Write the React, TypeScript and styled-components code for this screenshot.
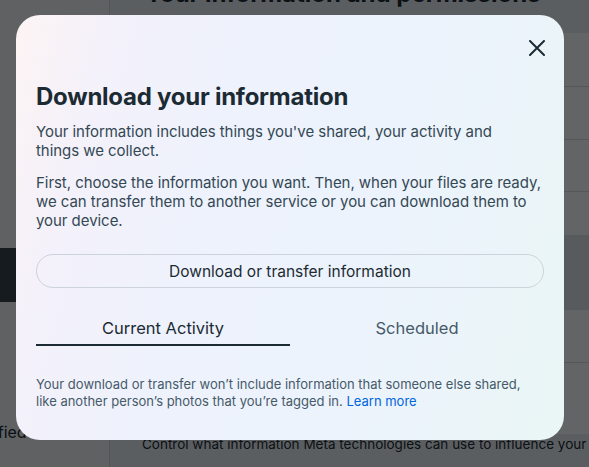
import React from "react";
import styled, { createGlobalStyle } from "styled-components";

const Global = createGlobalStyle`
  html, body { margin: 0; padding: 0; }
  body { width: 589px; height: 467px; overflow: hidden; font-family: Inter, "Noto Sans", "Liberation Sans", sans-serif; }
  #root { width: 589px; height: 467px; }
`;

const Page = styled.div`
  position: relative;
  width: 589px;
  height: 467px;
  display: flex;
  overflow: hidden;
  background: #eef3f8;
`;

const Sidebar = styled.aside`
  width: 109px;
  flex: none;
  border-right: 1px solid #cfd6dc;
  display: flex;
  flex-direction: column;
  overflow: hidden;
`;

const SideSpacer = styled.div<{ h: number }>`
  height: ${(p) => p.h}px;
  flex: none;
`;

const SideActive = styled.div`
  height: 54px;
  background: #35444c;
  flex: none;
`;

const SideLabel = styled.div`
  margin-left: -32px;
  font-size: 16px;
  line-height: 20px;
  color: #1c2b33;
  white-space: nowrap;
`;

const Content = styled.main`
  flex: 1;
  display: flex;
  flex-direction: column;
  min-width: 0;
`;

const Header = styled.div`
  height: 33px;
  background: #e4ebf2;
  display: flex;
  align-items: flex-end;
  padding-left: 35px;
  overflow: hidden;
`;

const HeaderTitle = styled.h1`
  margin: 0 0 24px;
  font-size: 24px;
  line-height: 30px;
  font-weight: 700;
  color: #1c2b33;
  white-space: nowrap;
`;

const Row = styled.div<{ h: number; dark?: boolean; last?: boolean }>`
  height: ${(p) => p.h}px;
  flex: none;
  background: ${(p) => (p.dark ? "#dde4eb" : "#f5f9fd")};
  border-bottom: ${(p) => (p.last ? "none" : "1px solid #d3d9df")};
  box-sizing: border-box;
`;

const FooterRow = styled.div`
  flex: 1;
  background: #e4ebf2;
  padding: 0 0 0 32px;
  font-size: 13.5px;
  line-height: 20px;
  color: #1c2b33;
  white-space: nowrap;
  overflow: hidden;
`;

const Overlay = styled.div`
  position: absolute;
  inset: 0;
  background: rgba(0, 0, 0, 0.6);
`;

const Modal = styled.div`
  position: absolute;
  left: 16px;
  top: 15px;
  width: 548px;
  height: 425px;
  box-sizing: border-box;
  border-radius: 24px;
  background: linear-gradient(105deg, #fdf4f4 0%, #f4f1fa 14%, #eef2fc 35%, #ecf3fc 65%, #eaf6f6 100%);
  padding: 0 20px;
  display: flex;
  flex-direction: column;
`;

const CloseRow = styled.div`
  display: flex;
  justify-content: flex-end;
  padding-top: 15px;
  height: 51px;
  box-sizing: border-box;
  margin-right: -11px;
`;

const CloseButton = styled.button`
  width: 36px;
  height: 36px;
  border: none;
  background: transparent;
  padding: 0;
  display: flex;
  align-items: center;
  justify-content: center;
  cursor: pointer;
  color: #1c2b33;
`;

const Title = styled.h2`
  margin: 16px 0 0;
  font-size: 24px;
  line-height: 30px;
  font-weight: 700;
  letter-spacing: -0.25px;
  color: #1c2b33;
`;

const Para = styled.p<{ mt: number; maxW?: number }>`
  margin: ${(p) => p.mt}px 0 0;
  max-width: ${(p) => (p.maxW ? `${p.maxW}px` : "none")};
  font-size: 15px;
  line-height: 19px;
  letter-spacing: -0.05px;
  color: #344854;
`;

const PillButton = styled.button`
  margin-top: 24px;
  height: 34px;
  width: 100%;
  border-radius: 17px;
  border: 1px solid #ccd3da;
  background: transparent;
  font-family: inherit;
  font-size: 15.5px;
  color: #1c2b33;
  font-weight: 400;
  cursor: pointer;
`;

const Tabs = styled.div`
  margin-top: 19px;
  display: grid;
  grid-template-columns: 1fr 1fr;
`;

const Tab = styled.div<{ active?: boolean }>`
  text-align: center;
  padding: 11px 0 6px;
  font-size: 16.5px;
  line-height: 20px;
  font-weight: 400;
  color: ${(p) => (p.active ? "#1c2b33" : "#465a69")};
  border-bottom: 2px solid ${(p) => (p.active ? "#1c2b33" : "transparent")};
`;

const Note = styled.p`
  margin: 30px 0 0;
  font-size: 13px;
  line-height: 17px;
  color: #465a69;
`;

const Link = styled.a`
  color: #0064e0;
  text-decoration: none;
`;

export default function App() {
  return (
    <>
      <Global />
      <Page>
        <Sidebar>
          <SideSpacer h={248} />
          <SideActive />
          <SideSpacer h={120} />
          <SideLabel>Verified</SideLabel>
        </Sidebar>
        <Content>
          <Header>
            <HeaderTitle>Your information and permissions</HeaderTitle>
          </Header>
          <Row h={54} />
          <Row h={53} />
          <Row h={52} />
          <Row h={43} last />
          <Row h={75} dark last />
          <Row h={53} />
          <Row h={71} last />
          <FooterRow>Control what information Meta technologies can use to influence your experience</FooterRow>
        </Content>
        <Overlay />
        <Modal role="dialog">
          <CloseRow>
            <CloseButton aria-label="Close">
              <svg width="16" height="16" viewBox="0 0 16 16" fill="none">
                <path d="M1 1 L15 15 M15 1 L1 15" stroke="currentColor" strokeWidth="2" strokeLinecap="round" />
              </svg>
            </CloseButton>
          </CloseRow>
          <Title>Download your information</Title>
          <Para mt={10} maxW={480}>
            Your information includes things you've shared, your activity and things we collect.
          </Para>
          <Para mt={13}>
            First, choose the information you want. Then, when your files are ready, we can transfer them to another
            service or you can download them to your device.
          </Para>
          <PillButton>Download or transfer information</PillButton>
          <Tabs>
            <Tab active>Current Activity</Tab>
            <Tab>Scheduled</Tab>
          </Tabs>
          <Note>
            Your download or transfer won’t include information that someone else shared, like another person’s photos
            that you’re tagged in. <Link href="#">Learn more</Link>
          </Note>
        </Modal>
      </Page>
    </>
  );
}
